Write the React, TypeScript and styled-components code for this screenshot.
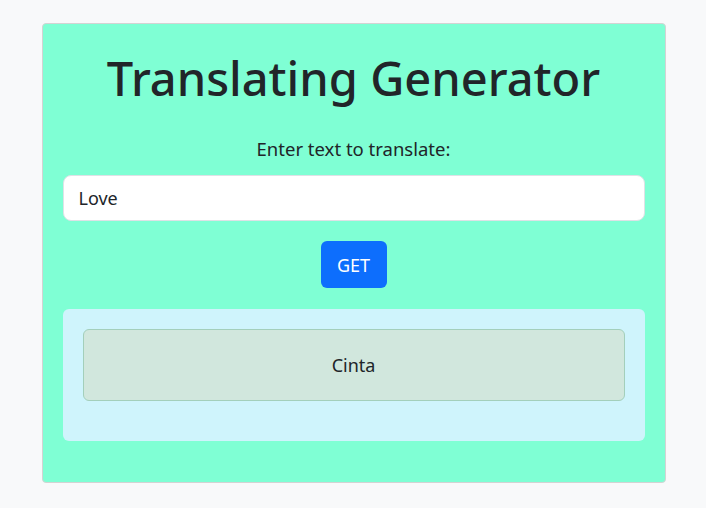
import React from "react";
import styled, { createGlobalStyle } from "styled-components";

const Global = createGlobalStyle`
  html, body { margin: 0; padding: 0; background: #f8f9fa; }
  body { font-family: "Noto Sans", "Open Sans", sans-serif; color: #212529; }
  * { box-sizing: border-box; }
`;

const Page = styled.div`
  display: flex;
  justify-content: center;
  padding: 23px 0 0 1px;
`;

const Card = styled.div`
  width: 624px;
  height: 460px;
  background: #7fffd4;
  border: 1px solid #d3d3d3;
  border-radius: 4px;
  padding: 20px 20px;
  display: flex;
  flex-direction: column;
  align-items: stretch;
`;

const Title = styled.h1`
  margin: 5px 0 0;
  font-size: 47px;
  font-weight: 500;
  line-height: 58px;
  text-align: center;
  color: #212529;
`;

const Label = styled.label`
  margin-top: 30px;
  font-size: 18.5px;
  line-height: 24px;
  text-align: center;
`;

const Input = styled.input`
  margin-top: 14px;
  height: 46px;
  width: 100%;
  border: 1px solid #dee2e6;
  border-radius: 8px;
  background: #fff;
  padding: 0 15px;
  font-family: inherit;
  font-size: 18px;
  color: #212529;
  outline: none;
`;

const ButtonRow = styled.div`
  display: flex;
  justify-content: center;
  margin-top: 20px;
`;

const Button = styled.button`
  width: 66px;
  height: 47px;
  border: none;
  border-radius: 6px;
  background: #0d6efd;
  color: #fff;
  font-family: inherit;
  font-size: 18px;
`;

const ResultBox = styled.div`
  margin-top: 21px;
  background: #cff4fc;
  border-radius: 6px;
  padding: 20px 20px 40px;
`;

const Alert = styled.div`
  height: 72px;
  background: #d1e7dd;
  border: 1px solid #a3cfbb;
  border-radius: 6px;
  display: flex;
  align-items: center;
  justify-content: center;
  font-size: 18px;
  color: #212529;
`;

export default function App() {
  return (
    <>
      <Global />
      <Page>
        <Card>
          <Title>Translating Generator</Title>
          <Label htmlFor="txt">Enter text to translate:</Label>
          <Input id="txt" defaultValue="Love" />
          <ButtonRow>
            <Button>GET</Button>
          </ButtonRow>
          <ResultBox>
            <Alert>Cinta</Alert>
          </ResultBox>
        </Card>
      </Page>
    </>
  );
}
